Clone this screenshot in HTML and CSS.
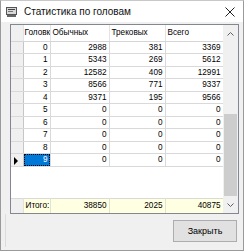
FILE: index.html
```html
<!DOCTYPE html>
<html lang="ru">
<head>
	<meta charset="UTF-8">
	<title>Статистика по головам</title>
	<link rel="stylesheet" href="styles.css">
</head>
<body>
<div class="window">
	<div class="titlebar">
		<svg class="app_icon" width="11" height="10" viewBox="0 0 11 10">
			<rect x="0.5" y="0.5" width="10" height="7" fill="#d8d8d8" stroke="#555"/>
			<rect x="2" y="2" width="7" height="1" fill="#444"/>
			<rect x="2" y="4" width="5" height="1" fill="#777"/>
			<rect x="1" y="8" width="9" height="2" fill="#666"/>
		</svg>
		<span class="caption">Статистика по головам</span>
		<svg class="close" width="10" height="10" viewBox="0 0 10 10">
			<path d="M0.5 0.5 L9.5 9.5 M9.5 0.5 L0.5 9.5" stroke="#222" stroke-width="1" fill="none"/>
		</svg>
	</div>
	<div class="client">
		<div class="grid">
			<div class="cells">
				<table class="data">
					<tr class="head">
						<td class="rh"></td>
						<td class="c1">Головк</td>
						<td class="c2">Обычных</td>
						<td class="c3">Трековых</td>
						<td class="c4">Всего</td>
					</tr>
					<tr><td class="rh"></td><td class="num">0</td><td class="num">2988</td><td class="num">381</td><td class="num">3369</td></tr>
					<tr class="tall"><td class="rh"></td><td class="num">1</td><td class="num">5343</td><td class="num">269</td><td class="num">5612</td></tr>
					<tr><td class="rh"></td><td class="num">2</td><td class="num">12582</td><td class="num">409</td><td class="num">12991</td></tr>
					<tr class="tall"><td class="rh"></td><td class="num">3</td><td class="num">8566</td><td class="num">771</td><td class="num">9337</td></tr>
					<tr><td class="rh"></td><td class="num">4</td><td class="num">9371</td><td class="num">195</td><td class="num">9566</td></tr>
					<tr class="tall"><td class="rh"></td><td class="num">5</td><td class="num">0</td><td class="num">0</td><td class="num">0</td></tr>
					<tr><td class="rh"></td><td class="num">6</td><td class="num">0</td><td class="num">0</td><td class="num">0</td></tr>
					<tr class="tall"><td class="rh"></td><td class="num">7</td><td class="num">0</td><td class="num">0</td><td class="num">0</td></tr>
					<tr><td class="rh"></td><td class="num">8</td><td class="num">0</td><td class="num">0</td><td class="num">0</td></tr>
					<tr class="tall"><td class="rh"><span class="arrow"></span></td><td class="num sel"><span>9</span></td><td class="num">0</td><td class="num">0</td><td class="num">0</td></tr>
				</table>
				<div class="empty"></div>
				<table class="totals">
					<tr>
						<td class="rh"></td>
						<td class="c1">Итого:</td>
						<td class="c2 num">38850</td>
						<td class="c3 num">2025</td>
						<td class="c4 num">40875</td>
					</tr>
				</table>
			</div>
			<div class="scroll">
				<div class="btn">
					<svg width="7" height="4" viewBox="0 0 7 4"><path d="M0.5 3.5 L3.5 0.5 L6.5 3.5" stroke="#606060" fill="none"/></svg>
				</div>
				<div class="track"><div class="thumb"></div></div>
				<div class="btn">
					<svg width="7" height="4" viewBox="0 0 7 4"><path d="M0.5 0.5 L3.5 3.5 L6.5 0.5" stroke="#606060" fill="none"/></svg>
				</div>
			</div>
		</div>
		<div class="footer">
			<button class="close_btn">Закрыть</button>
		</div>
	</div>
</div>
</body>
</html>
```
FILE: styles.css
```css
*{
	margin:0;
	padding:0;
	box-sizing:border-box;
}
body{
	background:#fff;
	font-family:"Liberation Sans", Arial, sans-serif;
	font-size:8.2px;
	color:#000;
}
.window{
	width:244px;
	height:251px;
	border:1px solid #9a9a9a;
	border-top-color:#c8c8c8;
	background:#f0f0f0;
	display:flex;
	flex-direction:column;
}
.titlebar{
	height:21px;
	background:#fff;
	display:flex;
	align-items:center;
	padding:0 8px 0 5px;
}
.app_icon{
	margin-right:7px;
}
.caption{
	flex:1;
	font-size:10px;
	color:#111;
}
.client{
	flex:1;
	padding:2px 4px 3px 4px;
	display:flex;
	flex-direction:column;
}
.grid{
	margin-left:5px;
	height:190px;
	display:flex;
	border:1px solid #828790;
	background:#fff;
}
.cells{
	width:212px;
	display:flex;
	flex-direction:column;
}
table{
	border-collapse:collapse;
	table-layout:fixed;
	width:212px;
}
td{
	border-right:1px solid #d9d9d9;
	border-bottom:1px solid #d9d9d9;
	padding:0 2px;
	height:12px;
	white-space:nowrap;
	overflow:hidden;
	line-height:11px;
}
tr.tall td{
	height:13px;
}
td.rh{
	width:12px;
	background:#f0f0f0;
	border-right-color:#c6c6c6;
	padding:0;
	position:relative;
}
.head td{
	height:16px;
	background:#fff;
	border-right-color:#e3e3e3;
	border-bottom-color:#d5d5d5;
	vertical-align:middle;
}
.head td.rh{
	background:#f0f0f0;
}
.head .c1{
	padding:0 1px;
}
.c1{width:27px;}
.c2{width:59px;}
.c3{width:56px;}
.c4{width:58px;}
.num{
	text-align:right;
}
td.sel{
	padding:0;
}
td.sel span{
	display:block;
	height:100%;
	background:#0078d7;
	color:#fff;
	outline:1px dotted #000;
	outline-offset:-1px;
	padding:0 2px;
	line-height:12px;
}
.arrow{
	position:absolute;
	left:3px;
	top:3px;
	border-left:4px solid #000;
	border-top:4px solid transparent;
	border-bottom:4px solid transparent;
}
.empty{
	flex:1;
	background:#fff;
}
.totals td{
	height:15px;
	background:#ffffe1;
	border-top:1px solid #d9d9d9;
	border-bottom:none;
	border-right-color:#e3e3d0;
}
.totals td.rh{
	background:#f0f0f0;
}
.scroll{
	width:16px;
	background:#f0f0f0;
	display:flex;
	flex-direction:column;
}
.btn{
	height:17px;
	display:flex;
	align-items:center;
	justify-content:center;
}
.track{
	flex:1;
	display:flex;
	flex-direction:column;
	justify-content:flex-end;
	padding:0 1px 0 1px;
}
.thumb{
	height:82px;
	background:#cdcdcd;
}
.footer{
	flex:1;
	display:flex;
	justify-content:flex-end;
	align-items:center;
	padding-right:2px;
	border-left:1px solid #dcdcdc;
}
.close_btn{
	width:64px;
	height:22px;
	background:#e1e1e1;
	border:1px solid #adadad;
	font-family:"Liberation Sans", Arial, sans-serif;
	font-size:9px;
	color:#000;
}
```
